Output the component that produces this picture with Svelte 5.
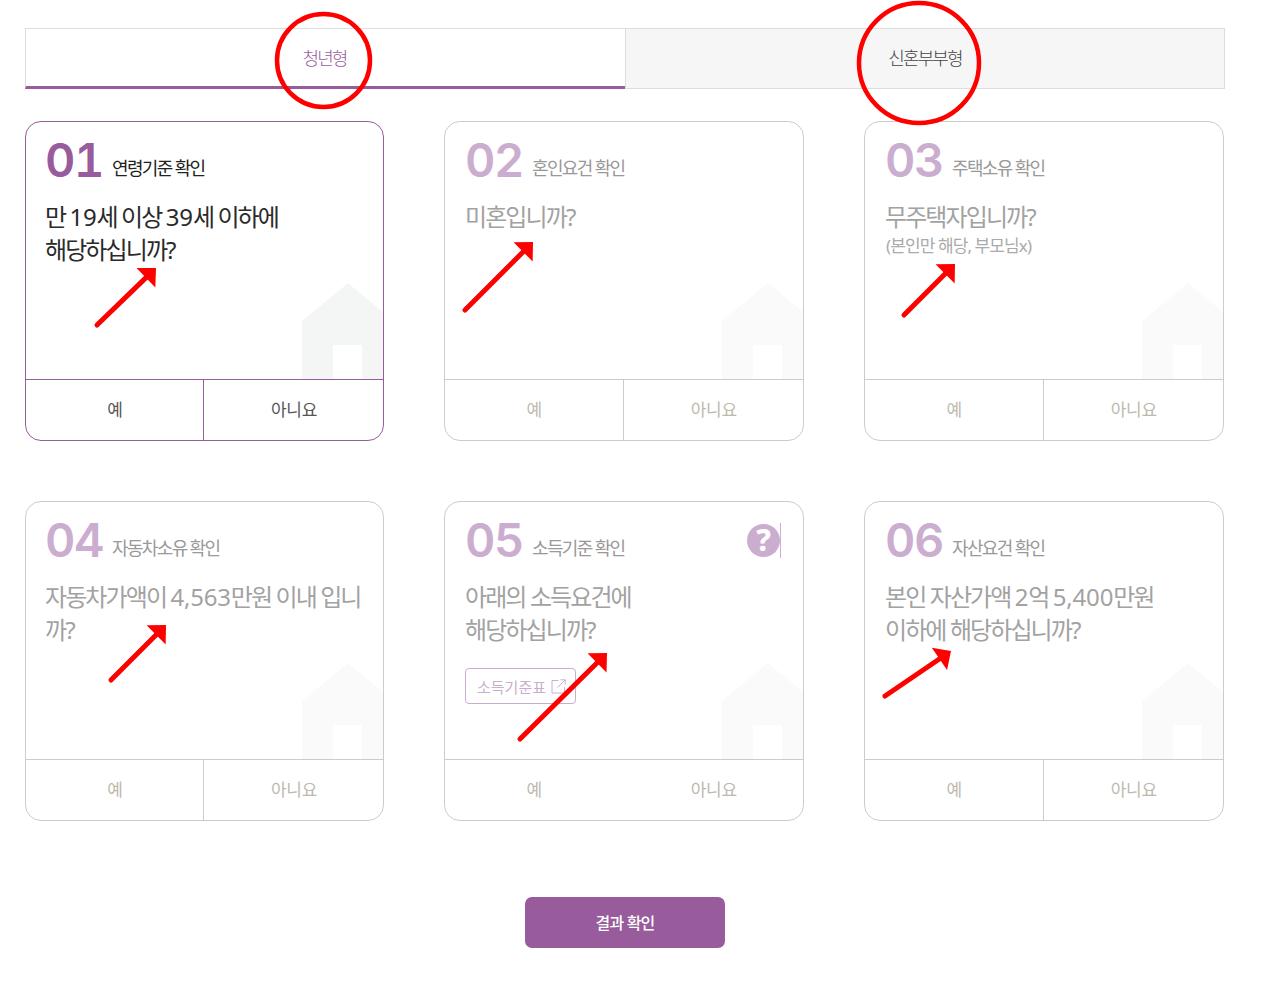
<script>
  const cards = [
    { no: '01', label: '연령기준 확인', q: ['만 19세 이상 39세 이하에', '해당하십니까?'], active: true },
    { no: '02', label: '혼인요건 확인', q: ['미혼입니까?'] },
    { no: '03', label: '주택소유 확인', q: ['무주택자입니까?'], sub: '(본인만 해당, 부모님x)' },
    { no: '04', label: '자동차소유 확인', q: ['자동차가액이 4,563만원 이내 입니', '까?'] },
    { no: '05', label: '소득기준 확인', q: ['아래의 소득요건에', '해당하십니까?'], help: true, link: '소득기준표', noDivider: true },
    { no: '06', label: '자산요건 확인', q: ['본인 자산가액 2억 5,400만원', '이하에 해당하십니까?'] }
  ];
  const arrows = [
    [97, 325, 156, 268],
    [465, 310, 533, 242],
    [904, 315, 955, 264],
    [111, 680, 166, 625],
    [520, 739, 607, 653],
    [885, 696, 951, 651]
  ];
  const segs = (line) => line.split(/([\d,]+)/);
  function head(a) {
    const [x1, y1, x2, y2] = a;
    const len = Math.hypot(x2 - x1, y2 - y1);
    const ux = (x2 - x1) / len, uy = (y2 - y1) / len;
    const bx = x2 - ux * 14, by = y2 - uy * 14;
    const nx = -uy * 13.5, ny = ux * 13.5;
    return `${x2},${y2} ${bx + nx},${by + ny} ${bx - nx},${by - ny}`;
  }
  function shaft(a) {
    const [x1, y1, x2, y2] = a;
    const len = Math.hypot(x2 - x1, y2 - y1);
    return { x: x2 - ((x2 - x1) / len) * 11, y: y2 - ((y2 - y1) / len) * 11 };
  }
</script>

<div class="page">
  <div class="tabs">
    <div class="tab on">청년형</div>
    <div class="tab">신혼부부형</div>
  </div>

  <div class="grid">
    {#each cards as c}
      <section class="card" class:active={c.active}>
        <svg class="house" viewBox="0 0 81 96" width="81" height="96" aria-hidden="true">
          <path fill-rule="evenodd" d="M0 38 L46 0 L81 29 V96 H0 Z M31 62 V96 H60 V62 Z" />
        </svg>
        <div class="body">
          <div class="title">
            <span class="no">{c.no}</span>
            <span class="label">{c.label}</span>
            {#if c.help}
              <span class="help">?</span>
            {/if}
          </div>
          <p class="q">
            {#each c.q as line}
              <span class="line">{#each segs(line) as s, i}{#if i % 2}<span class="num">{s}</span>{:else}{s}{/if}{/each}</span>
            {/each}
          </p>
          {#if c.sub}<p class="sub">{c.sub}</p>{/if}
          {#if c.link}
            <span class="link">{c.link}
              <svg viewBox="0 0 15 15" width="15" height="15" fill="none" aria-hidden="true">
                <path d="M7.5 1.5H1V14H13.5V8M6.5 8.5L14 1M9.5 .8H14.2V5.5" />
              </svg>
            </span>
          {/if}
        </div>
        <div class="answers">
          <div class="ans">예</div>
          <div class="ans" class:nodiv={c.noDivider}>아니요</div>
        </div>
      </section>
    {/each}
  </div>

  <div class="foot"><button class="submit">결과 확인</button></div>

  <svg class="marks" width="1270" height="991" aria-hidden="true">
    <circle cx="323.5" cy="60.5" r="46.5" />
    <circle cx="919" cy="63" r="60" />
    {#each arrows as a}
      {@const s = shaft(a)}
      <line x1={a[0]} y1={a[1]} x2={s.x} y2={s.y} />
      <polygon points={head(a)} />
    {/each}
  </svg>
</div>

<style>
  :global(body) {
    margin: 0;
    background: #fff;
    font-family: "Noto Sans", "Noto Sans CJK KR", sans-serif;
  }
  .page {
    position: relative;
    width: 1270px;
    height: 991px;
    box-sizing: border-box;
    padding: 28px 0 0 25px;
    overflow: hidden;
  }
  .tabs {
    display: grid;
    grid-template-columns: 600px 600px;
    width: 1200px;
    height: 61px;
  }
  .tab {
    box-sizing: border-box;
    display: flex;
    align-items: center;
    justify-content: center;
    padding-bottom: 4px;
    border: 1px solid #ddd;
    background: #f6f6f6;
    color: #444;
    font-size: 18px;
    letter-spacing: -1.9px;
    font-weight: 300;
  }
  .tab.on {
    background: #fff;
    color: #985b9c;
    border-right: 0;
    border-bottom: 3px solid #985b9c;
    padding: 0 2px 2px 0;
  }
  .grid {
    display: grid;
    grid-template-columns: 359px 360px 360px;
    gap: 60px;
    width: 1199px;
    margin-top: 32px;
  }
  .card {
    position: relative;
    box-sizing: border-box;
    height: 320px;
    display: flex;
    flex-direction: column;
    border: 1px solid #ccc;
    border-radius: 16px;
    overflow: hidden;
    background: #fff;
  }
  .card.active {
    border-color: #985b9c;
  }
  .house {
    position: absolute;
    right: 0;
    bottom: 61px;
    fill: #fafafa;
  }
  .active .house {
    fill: #f4f6f6;
  }
  .body {
    position: relative;
    flex: 1;
    box-sizing: border-box;
    padding: 0 20px;
    min-height: 0;
  }
  .card:not(:nth-child(3n + 1)) .body {
    padding-left: 21px;
  }
  .title {
    display: flex;
    align-items: flex-start;
    height: 66px;
    position: relative;
  }
  .no {
    flex: none;
    width: 56px;
    margin: 0 11px 0 -1px;
    font-family: "Inter", sans-serif;
    font-size: 47px;
    font-weight: 600;
    font-variant-numeric: tabular-nums;
    line-height: 76px;
    color: #cbadd0;
    letter-spacing: -1.5px;
  }
  .label {
    margin-top: 33px;
    font-size: 18px;
    line-height: 26px;
    letter-spacing: -1.65px;
    color: #999;
    font-weight: 400;
    white-space: nowrap;
  }
  .active .no {
    color: #985b9c;
  }
  .active .label {
    color: #222;
  }
  .help {
    position: absolute;
    right: 3px;
    top: 22px;
    width: 33px;
    height: 33px;
    border-radius: 50%;
    background: #cbadd0;
    color: #fff;
    text-align: center;
    line-height: 32px;
    font-weight: 800;
    font-size: 30px;
    letter-spacing: 0;
  }
  .help::after {
    content: "";
    position: absolute;
    right: -1px;
    top: -1px;
    bottom: -1px;
    width: 1px;
    background: #cbadd0;
  }
  .q {
    margin: 12px 0 0 -1px;
    font-size: 24px;
    line-height: 33px;
    letter-spacing: -1.9px;
    color: #a2a2a2;
    font-weight: 400;
  }
  .line {
    display: block;
  }
  .num {
    letter-spacing: -0.2px;
  }
  .active .q {
    color: #2a2a2a;
  }
  .sub {
    margin: 0;
    font-size: 17px;
    line-height: 25px;
    letter-spacing: -0.9px;
    color: #aaa;
    font-weight: 400;
  }
  .link {
    box-sizing: border-box;
    display: inline-flex;
    align-items: center;
    gap: 5px;
    margin: 22px 0 0 -1px;
    width: 111px;
    height: 36px;
    padding-left: 11px;
    border: 1px solid #cbadd0;
    border-radius: 4px;
    color: #cbadd0;
    font-size: 15px;
    letter-spacing: 0;
    white-space: nowrap;
  }
  .link svg {
    stroke: #cbadd0;
    stroke-width: 1;
    flex: none;
  }
  .answers {
    position: relative;
    flex: none;
    height: 61px;
    display: grid;
    grid-template-columns: calc(50% - 1.5px) 1fr;
    border-top: 1px solid #ccc;
    box-sizing: border-box;
  }
  .active .answers {
    border-color: #985b9c;
  }
  .ans {
    display: flex;
    align-items: center;
    justify-content: center;
    color: #bdb9ad;
    font-size: 17px;
    font-weight: 400;
    letter-spacing: -0.3px;
    padding: 0 0 4px 1px;
  }
  .ans + .ans {
    border-left: 1px solid #ccc;
  }
  .ans.nodiv {
    border-left-color: transparent;
  }
  .active .ans {
    color: #555;
  }
  .active .ans + .ans {
    border-left-color: #985b9c;
  }
  .foot {
    display: flex;
    justify-content: center;
    width: 1200px;
    margin-top: 76px;
  }
  .submit {
    width: 200px;
    height: 51px;
    border: 0;
    border-radius: 7px;
    background: #985b9c;
    color: #fff;
    font-family: inherit;
    font-size: 16px;
    letter-spacing: -0.8px;
    font-weight: 500;
    padding-bottom: 3px;
  }
  .marks {
    position: absolute;
    inset: 0;
    pointer-events: none;
  }
  .marks circle {
    fill: none;
    stroke: #f00;
    stroke-width: 4.5;
  }
  .marks line {
    stroke: #f00;
    stroke-width: 5;
    stroke-linecap: round;
  }
  .marks polygon {
    fill: #f00;
  }
</style>
